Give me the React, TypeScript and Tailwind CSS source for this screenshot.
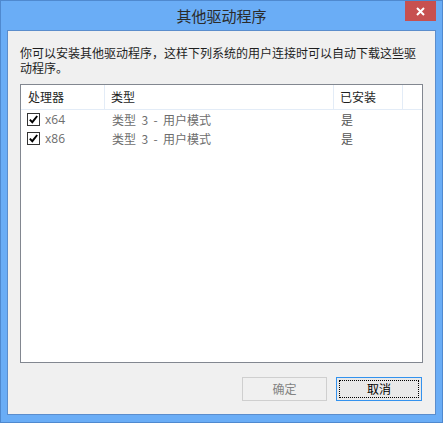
import React from 'react';

const rows = [
  { cpu: 'x64', type: '类型 3 - 用户模式', installed: '是' },
  { cpu: 'x86', type: '类型 3 - 用户模式', installed: '是' },
];

const Check: React.FC = () => (
  <span className="w-[13px] h-[13px] border border-[#333333] bg-white flex items-center justify-center shrink-0">
    <svg width="9" height="9" viewBox="0 0 9 9">
      <path d="M0.8 4.6 L3.3 7.2 L8.2 1" fill="none" stroke="#000" strokeWidth="1.9" />
    </svg>
  </span>
);

const App: React.FC = () => {
  return (
    <div
      className="w-[443px] h-[423px] bg-[#6aadf6] border border-[#4f89cf] flex flex-col"
      style={{ fontFamily: '"Noto Sans CJK SC", "Liberation Sans", sans-serif' }}
    >
      {/* title bar */}
      <div className="relative h-[29px] flex items-center justify-center">
        <span className="text-[15px] text-[#2b2b2b] leading-none">其他驱动程序</span>
        <div className="absolute top-0 right-[6px] w-[31px] h-[20px] bg-[#c75050] flex items-center justify-center">
          <svg width="9" height="9" viewBox="0 0 9 9">
            <path d="M1 1 L8 8 M8 1 L1 8" stroke="#fff" strokeWidth="2" />
          </svg>
        </div>
      </div>

      {/* client area */}
      <div className="mx-[6px] h-[385px] bg-[#f0f0f0] border border-[#5b8dcc] flex flex-col px-[12px] pt-[14px]">
        <p className="text-[12px] leading-[15px] text-[#1e1e1e] w-[403px]">
          你可以安装其他驱动程序，这样下列系统的用户连接时可以自动下载这些驱动程序。
        </p>

        <div className="mt-[9px] w-[403px] h-[279px] bg-white border border-[#828790] text-[12px]">
          <div className="flex h-[25px] border-b border-[#e3ecf7] text-[#1e1e1e]">
            <div className="w-[84px] pl-[7px] flex items-center border-r border-[#e3ecf7]">处理器</div>
            <div className="w-[229px] pl-[6px] flex items-center border-r border-[#e3ecf7]">类型</div>
            <div className="w-[69px] pl-[6px] flex items-center border-r border-[#e3ecf7]">已安装</div>
            <div className="flex-1" />
          </div>
          {rows.map((r) => (
            <div key={r.cpu} className="flex h-[19px] items-center text-[#6d6d6d]">
              <div className="w-[84px] pl-[6px] flex items-center gap-[5px]">
                <Check />
                <span style={{ fontFamily: '"Open Sans", "Noto Sans CJK SC", sans-serif' }}>{r.cpu}</span>
              </div>
              <div className="w-[229px] pl-[7px] whitespace-pre">{'类型  3  -  用户模式'}</div>
              <div className="w-[69px] pl-[7px] text-[#555555]">{r.installed}</div>
            </div>
          ))}
        </div>

        <div className="mt-[14px] flex justify-end gap-[9px] pr-[1px]">
          <div className="w-[85px] h-[24px] border border-[#cfcfcf] bg-[#f0f0f0] flex items-center justify-center text-[12px] text-[#838383]">
            确定
          </div>
          <div className="w-[86px] h-[24px] border border-[#3392ee] bg-[#e9e9e9] p-[2px]">
            <div className="w-full h-full border border-dotted border-black flex items-center justify-center text-[12px] text-black">
              取消
            </div>
          </div>
        </div>
      </div>
    </div>
  );
};

export default App;
